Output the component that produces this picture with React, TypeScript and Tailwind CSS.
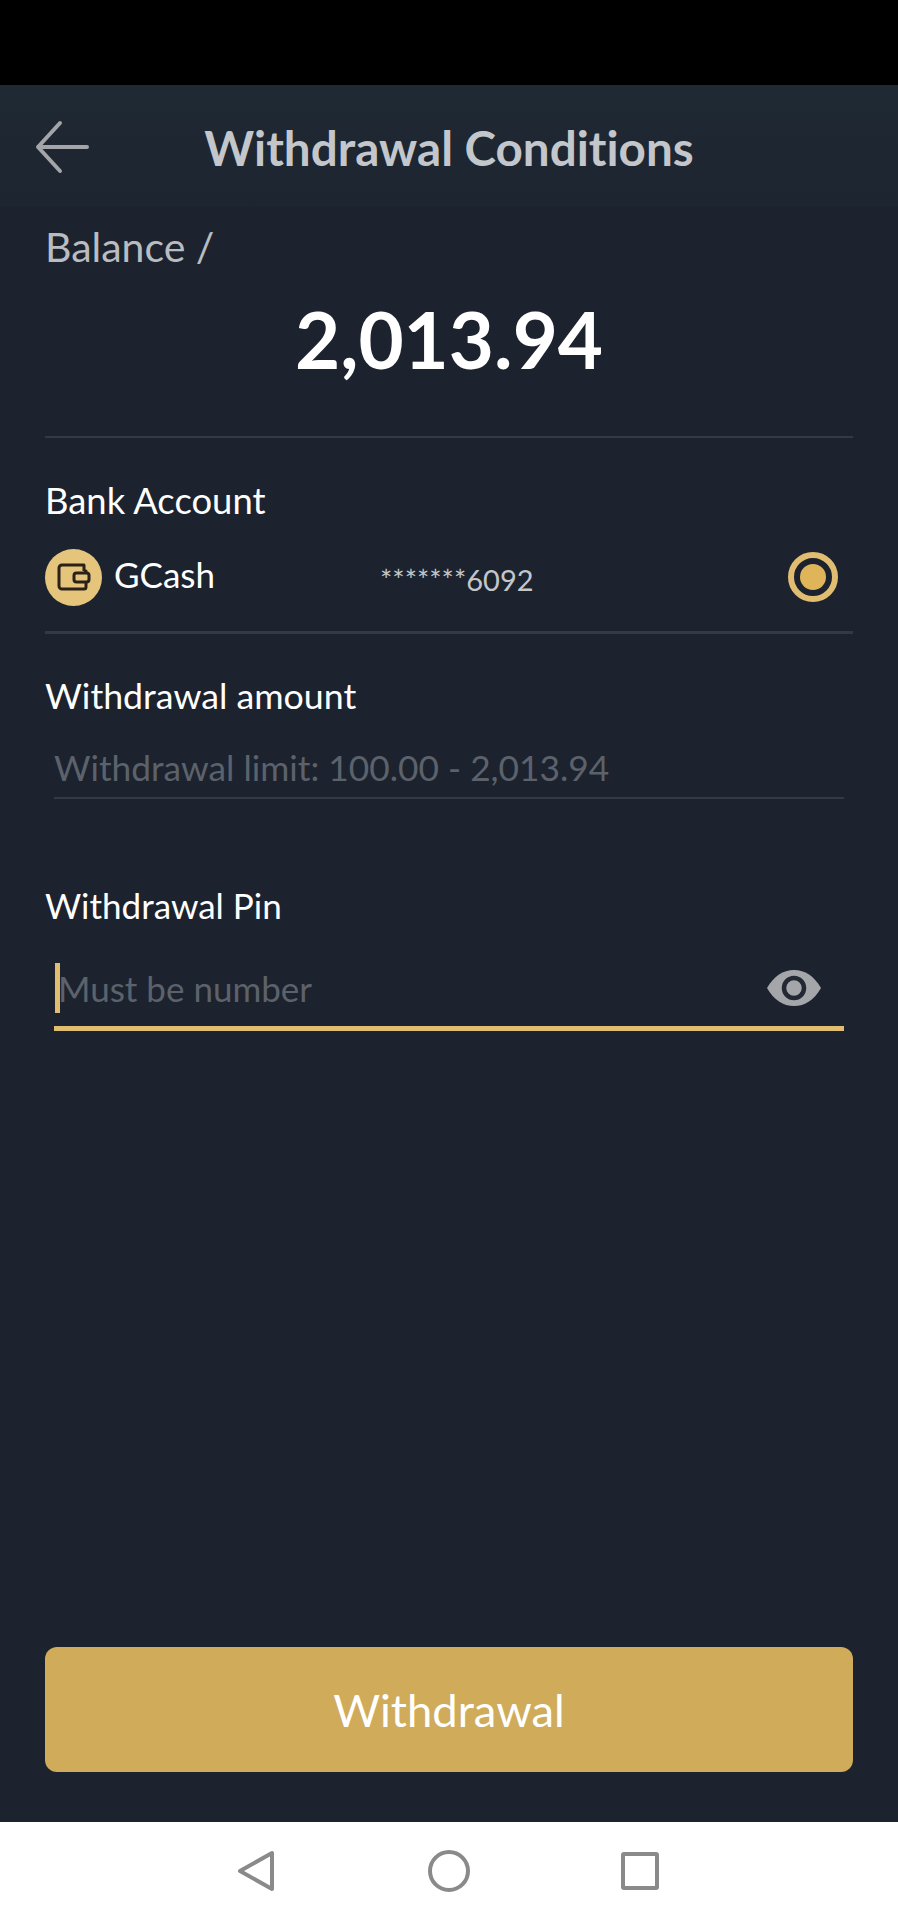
const font = "font-['Lato','Liberation_Sans',sans-serif] [font-variant-ligatures:none]";

function WalletIcon() {
  return (
    <svg width="34" height="30" viewBox="0 0 34 30" fill="none" stroke="#2a2118" strokeWidth="3">
      <path d="M5 3h22v6M5 3a3 3 0 0 0-3 3v18a3 3 0 0 0 3 3h22a2 2 0 0 0 2-2v-5M27 9h2v3" strokeLinejoin="round" />
      <rect x="17" y="11" width="15" height="9" rx="2.5" />
    </svg>
  );
}

function EyeIcon() {
  return (
    <svg width="56" height="38" viewBox="0 0 56 38">
      <path d="M1 19C8 7 17 1 28 1s20 6 27 18c-7 12-16 18-27 18S8 31 1 19z" fill="#a4a6a9" />
      <circle cx="28" cy="19" r="10" fill="none" stroke="#232833" strokeWidth="4.5" />
    </svg>
  );
}

export default function App() {
  return (
    <div className={`flex h-[1920px] w-[898px] flex-col overflow-hidden bg-[#1c232e] ${font}`}>
      <div className="h-[85px] shrink-0 bg-black" />

      <header className="relative flex h-[122px] shrink-0 items-center justify-center bg-gradient-to-b from-[#1f2933] to-[#1d2530]">
        <svg className="absolute left-[35px] top-[35px]" width="56" height="54" viewBox="0 0 56 54" fill="none" stroke="#a3a5a8" strokeWidth="4" strokeLinecap="round" strokeLinejoin="round">
          <path d="M25 3 3 27l22 24h0M3 27h49" />
        </svg>
        <h1 className="mt-[4px] text-[47.6px] font-bold leading-none text-[#c3c6ca]">Withdrawal Conditions</h1>
      </header>

      <main className="flex flex-1 flex-col px-[45px]">
        <p className="mt-[16px] text-[41px] leading-[48px] text-[#b9bcc1]">Balance /</p>
        <p className="mt-[21px] text-center text-[78px] font-bold leading-[94px] text-white">2,013.94</p>
        <div className="mt-[50px] h-[2px] bg-[#333a46]" />

        <p className="mt-[41px] text-[36.4px] leading-[42px] text-white">Bank Account</p>
        <div className="relative mt-[27px] flex h-[58px] items-center">
          <span className="flex h-[57px] w-[57px] items-center justify-center rounded-full bg-[#e5c57c]">
            <WalletIcon />
          </span>
          <span className="mb-[6px] ml-[12px] w-[266px] text-[35px] leading-none text-white">GCash</span>
          <span className="mt-[4px] text-[29px] leading-none text-[#c3c6ca]">*******6092</span>
          <span className="absolute right-[15px] top-[4px] flex h-[50px] w-[50px] items-center justify-center rounded-full border-[6px] border-[#e0bd70]">
            <span className="h-[26px] w-[26px] rounded-full bg-[#e0b55a]" />
          </span>
        </div>
        <div className="mt-[25px] h-[3px] bg-[#333a46]" />

        <p className="mt-[41px] text-[35.7px] leading-[42px] text-white">Withdrawal amount</p>
        <div className="mx-[9px] mt-[29px] border-b-2 border-[#333a46] pb-[7px] text-[35.3px] leading-[44px] text-[#5c626b]">
          Withdrawal limit: 100.00 - 2,013.94
        </div>

        <p className="mt-[85px] text-[35px] leading-[42px] text-white">Withdrawal Pin</p>
        <div className="mx-[9px] mt-[37px] flex h-[68px] items-start border-b-[5px] border-[#e0bd70]">
          <span className="ml-px h-[50px] w-[5px] bg-[#e0bd70]" />
          <span className="-ml-[2px] mt-[3px] text-[35px] leading-[44px] text-[#5c626b]">Must be number</span>
          <span className="ml-auto mr-[22px] mt-[6px]">
            <EyeIcon />
          </span>
        </div>

        <button className="mt-auto mb-[50px] flex h-[125px] items-center justify-center rounded-[12px] bg-[#cfab5a] text-[45.3px] text-white">
          Withdrawal
        </button>
      </main>

      <nav className="flex h-[98px] shrink-0 items-center justify-center gap-[151px] bg-white">
        <svg className="-translate-x-[2px]" width="38" height="42" viewBox="0 0 38 42" fill="none" stroke="#8a8a8a" strokeWidth="4" strokeLinejoin="round">
          <path d="M35 3v36L3 21z" />
        </svg>
        <svg width="42" height="42" viewBox="0 0 42 42" fill="none" stroke="#8a8a8a" strokeWidth="4">
          <circle cx="21" cy="21" r="19" />
        </svg>
        <svg width="38" height="38" viewBox="0 0 38 38" fill="none" stroke="#8a8a8a" strokeWidth="4" strokeLinejoin="round">
          <rect x="2" y="2" width="34" height="34" rx="1" />
        </svg>
      </nav>
    </div>
  );
}
